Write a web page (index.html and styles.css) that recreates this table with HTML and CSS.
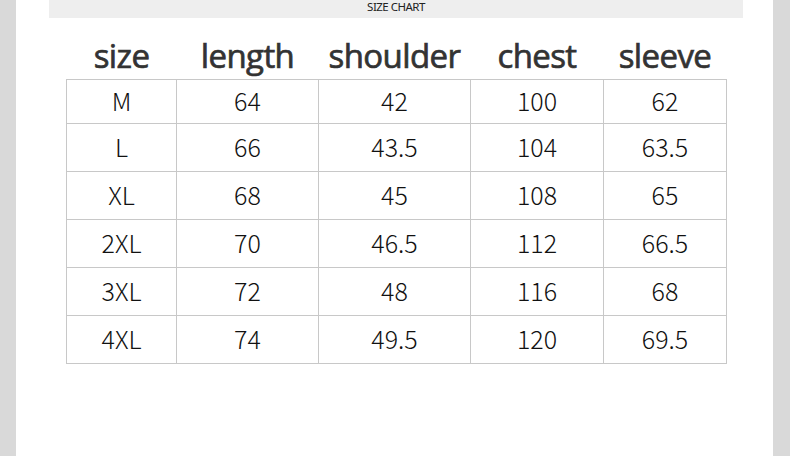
FILE: index.html
```html
<!DOCTYPE html>
<html>
<head>
<meta charset="utf-8">
<link rel="stylesheet" href="styles.css">
</head>
<body>
<div class="page">
  <div class="topbar"><span class="topbar-text">SIZE CHART</span></div>
  <table class="chart">
    <colgroup>
      <col class="c1"><col class="c2"><col class="c3"><col class="c4"><col class="c5">
    </colgroup>
    <thead>
      <tr class="head">
        <th>size</th><th>length</th><th>shoulder</th><th>chest</th><th>sleeve</th>
      </tr>
    </thead>
    <tbody>
      <tr class="first"><td>M</td><td>64</td><td>42</td><td>100</td><td>62</td></tr>
      <tr><td>L</td><td>66</td><td>43.5</td><td>104</td><td>63.5</td></tr>
      <tr><td>XL</td><td>68</td><td>45</td><td>108</td><td>65</td></tr>
      <tr><td>2XL</td><td>70</td><td>46.5</td><td>112</td><td>66.5</td></tr>
      <tr><td>3XL</td><td>72</td><td>48</td><td>116</td><td>68</td></tr>
      <tr><td>4XL</td><td>74</td><td>49.5</td><td>120</td><td>69.5</td></tr>
    </tbody>
  </table>
</div>
</body>
</html>
```
FILE: styles.css
```css
html, body {
  margin: 0;
  padding: 0;
  background: #d9d9d9;
}
.page {
  margin: 0 17px 0 16px;
  height: 456px;
  background: #ffffff;
  overflow: hidden;
}
.topbar {
  margin: 0 30px 0 33px;
  height: 18px;
  background: #eeeeee;
  text-align: center;
}
.topbar-text {
  display: inline-block;
  font-family: "Noto Sans", "Open Sans", sans-serif;
  font-size: 11.5px;
  line-height: 13px;
  color: #222;
  letter-spacing: -0.5px;
  vertical-align: top;
}
.chart {
  margin-left: 50px;
  border-collapse: collapse;
  table-layout: fixed;
  width: 660px;
}
.c1 { width: 110px; }
.c2 { width: 142px; }
.c3 { width: 152px; }
.c4 { width: 133px; }
.c5 { width: 123px; }
.head th {
  height: 61px;
  padding: 0 0 7px 0;
  vertical-align: bottom;
  font-family: "Open Sans", sans-serif;
  font-weight: 400;
  font-size: 33px;
  letter-spacing: -0.6px;
  line-height: 1;
  color: #333333;
  -webkit-text-stroke: 0.7px #333333;
  box-sizing: border-box;
}
.chart td {
  border: 1px solid #c8c8c8;
  height: 48px;
  padding: 0 0 3px 0;
  text-align: center;
  vertical-align: middle;
  font-family: "Noto Sans CJK SC", "Noto Sans", sans-serif;
  font-weight: 300;
  font-size: 25px;
  color: #111;
  box-sizing: border-box;
}
.chart tr.first td {
  height: 44px;
}
```
